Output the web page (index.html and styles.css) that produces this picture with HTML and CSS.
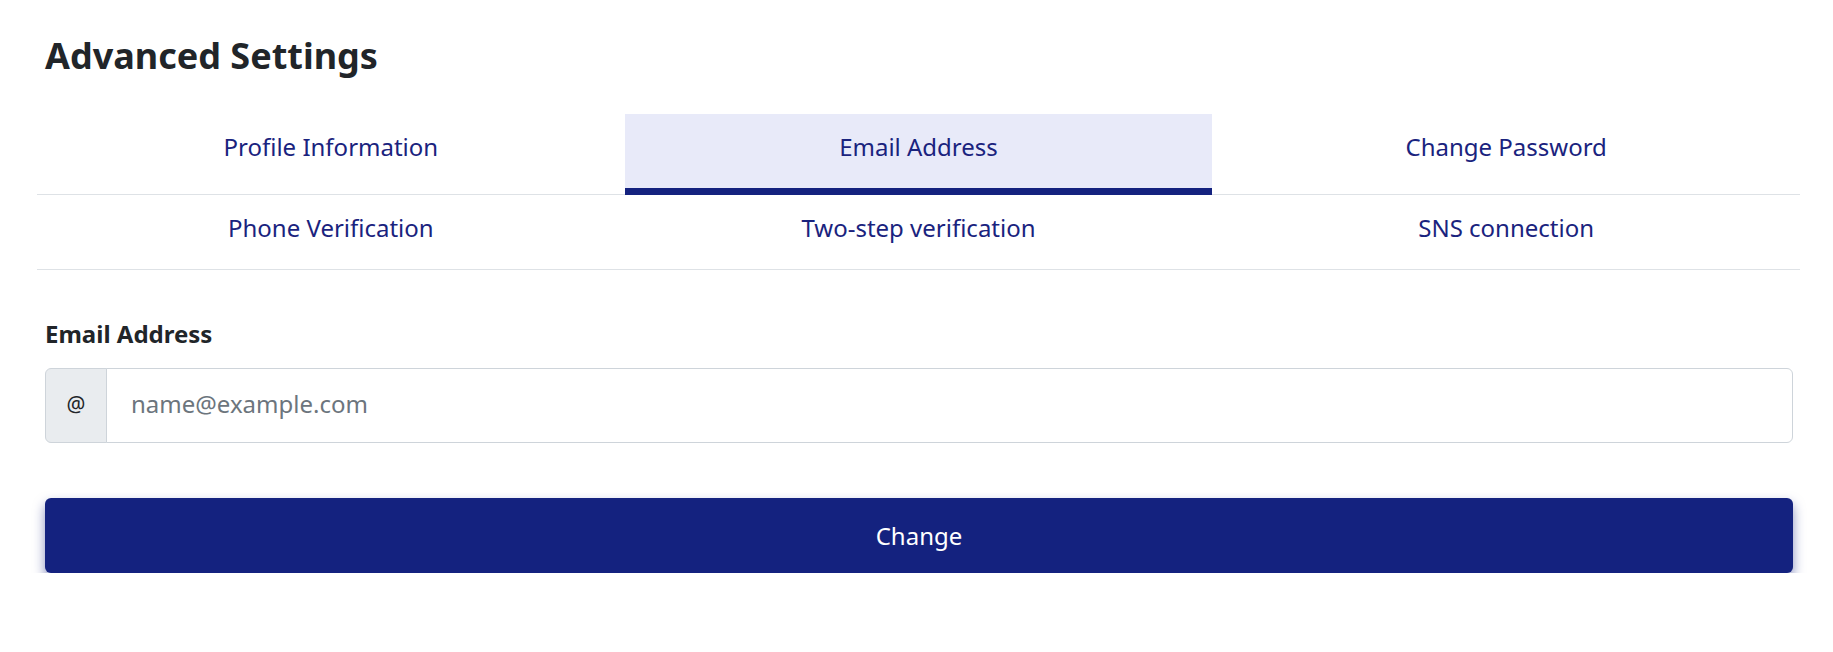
FILE: index.html
```html
<!DOCTYPE html>
<html lang="en">
<head>
<meta charset="utf-8">
<title>Advanced Settings</title>
<link rel="stylesheet" href="styles.css">
</head>
<body>
<main class="page">
  <h1 class="title">Advanced Settings</h1>
  <nav class="tabs">
    <a class="tab">Profile Information</a>
    <a class="tab active">Email Address</a>
    <a class="tab">Change Password</a>
    <a class="tab">Phone Verification</a>
    <a class="tab">Two-step verification</a>
    <a class="tab">SNS connection</a>
  </nav>
  <form class="form">
    <label class="label" for="email">Email Address</label>
    <div class="input-group">
      <span class="addon">@</span>
      <input id="email" class="input" type="email" placeholder="name@example.com">
    </div>
    <button type="button" class="btn">Change</button>
  </form>
</main>
</body>
</html>
```
FILE: styles.css
```css
* { box-sizing: border-box; }
html, body { margin: 0; padding: 0; background: #fff; }
body {
  font-family: "Noto Sans", "Open Sans", "DejaVu Sans", sans-serif;
  color: #212529;
}
.page {
  width: 1800px;
  padding: 34px 0 0 37px;
}
.title {
  margin: 0 0 37px 8px;
  font-size: 36px;
  line-height: 43px;
  font-weight: 700;
  color: #212529;
}
.tabs {
  display: grid;
  grid-template-columns: repeat(3, 1fr);
}
.tab {
  display: block;
  text-align: center;
  font-size: 24px;
  line-height: 36px;
  padding: 15px 0 23px;
  color: #1a237e;
  border-bottom: 1px solid #dee2e6;
  cursor: pointer;
}
.tab.active {
  background: #e8eaf9;
  border-bottom: 7px solid #14227f;
}
.form {
  padding: 0 7px 0 8px;
  display: flex;
  flex-direction: column;
}
.label {
  margin-top: 46px;
  margin-bottom: 16px;
  font-size: 24px;
  line-height: 36px;
  font-weight: 700;
  color: #212529;
}
.input-group {
  display: flex;
  height: 75px;
}
.addon {
  flex: 0 0 62px;
  display: flex;
  align-items: center;
  justify-content: center;
  padding-bottom: 3px;
  background: #e9ecef;
  border: 1px solid #ced4da;
  border-radius: 6px 0 0 6px;
  font-size: 21px;
  color: #212529;
}
.input {
  flex: 1;
  margin-left: -1px;
  border: 1px solid #ced4da;
  border-radius: 0 6px 6px 0;
  padding: 0 24px 4px;
  font-family: inherit;
  font-size: 24px;
  color: #212529;
  background: #fff;
  outline: none;
}
.input::placeholder { color: #6c757d; opacity: 1; }
.btn {
  margin-top: 55px;
  height: 75px;
  border: 0;
  border-radius: 6px;
  background: #14227f;
  color: #fff;
  font-family: inherit;
  font-size: 24px;
  box-shadow: 0 6px 12px rgba(20, 34, 127, 0.5);
  cursor: pointer;
}
```
